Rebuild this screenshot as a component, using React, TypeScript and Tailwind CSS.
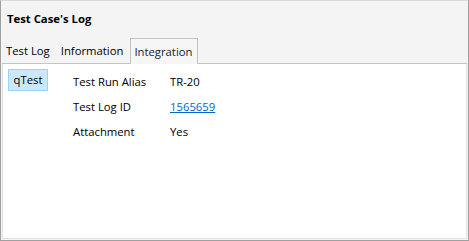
export default function App() {
  const rows = [
    { label: "Test Run Alias", value: "TR-20", link: false },
    { label: "Test Log ID", value: "1565659", link: true },
    { label: "Attachment", value: "Yes", link: false },
  ]

  return (
    <div className="w-[469px] h-[241px] border border-t-[#d9d9d9] border-[#a0a0a0] bg-[#f4f4f4] flex flex-col text-[11.3px] text-black font-['Open_Sans','Noto_Sans',sans-serif] leading-none">
      {/* Header */}
      <div className="h-[36px] pl-[6px] pt-[12px] font-bold">Test Case's Log</div>

      {/* Tabs */}
      <div className="flex items-end h-[27px] pl-[1px] pr-[1px]">
        <div className="h-[25px] flex items-center pl-[4px] pr-[7px] border-b border-[#c4c4c4]">Test Log</div>
        <div className="h-[25px] flex items-center pl-[4px] pr-[7px] border-b border-[#c4c4c4]">Information</div>
        <div className="h-[26px] flex items-center pl-[3px] pr-[5px] border border-b-0 border-[#c4c4c4] text-[#1b2033] bg-[#f6f6f6]">Integration</div>
        <div className="flex-1 h-[25px] border-b border-[#c4c4c4]" />
      </div>

      {/* Content */}
      <div className="flex-1 bg-white mx-[1px] mb-[1px] border-l border-r border-b border-[#e3e3e3] flex pt-[5px] pl-[5px]">
        <div className="w-[65px]">
          <div className="w-[40px] h-[22px] flex items-center justify-center bg-[#cce8ff] border border-[#99d1ff]">qTest</div>
        </div>
        <div className="flex flex-col">
          {rows.map((r) => (
            <div key={r.label} className="flex items-center h-[25px]">
              <div className="w-[97px]">{r.label}</div>
              {r.link ? (
                <span className="text-[#0066cc] underline">{r.value}</span>
              ) : (
                <span>{r.value}</span>
              )}
            </div>
          ))}
        </div>
      </div>
    </div>
  )
}
